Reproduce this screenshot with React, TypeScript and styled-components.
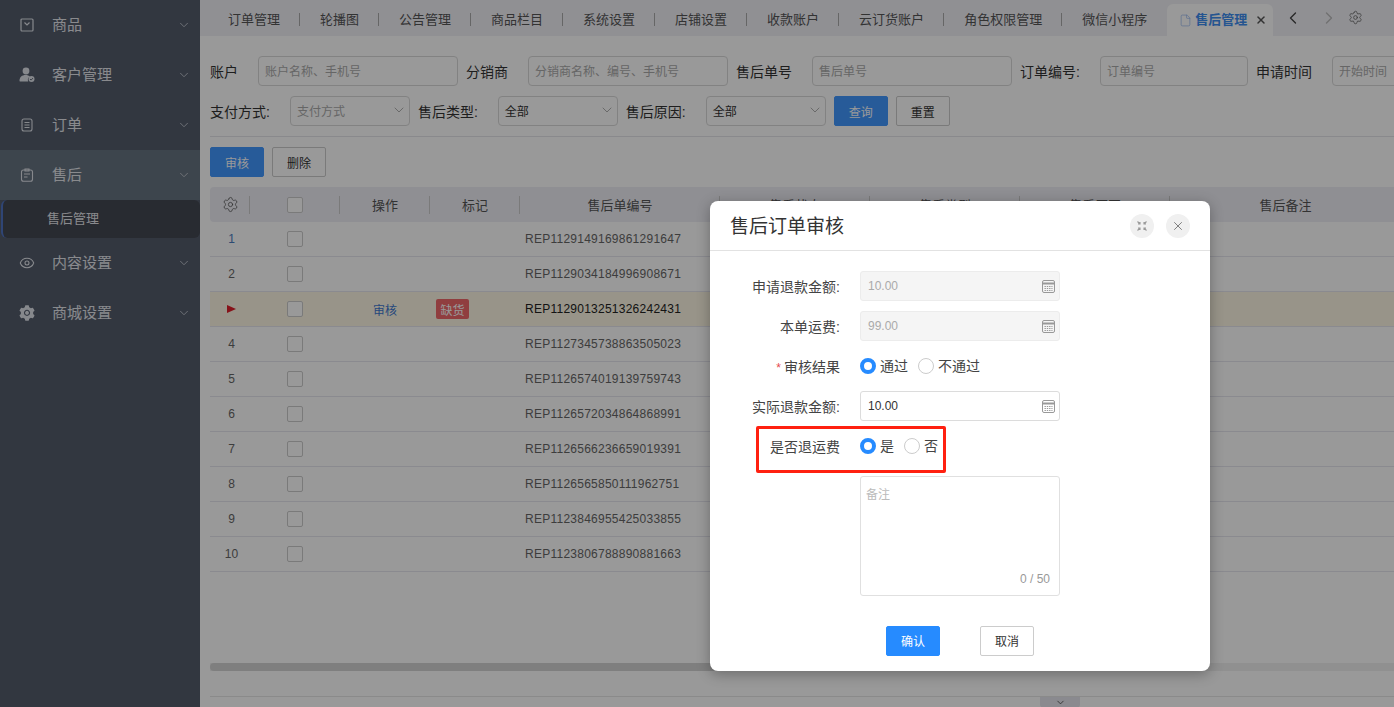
import styled, { createGlobalStyle } from "styled-components";
import { ChevronDown, ChevronLeft, ChevronRight, Eye, File, Settings, X } from "lucide-react";
import { AiFillSetting } from "react-icons/ai";

const GlobalStyle = createGlobalStyle`
  html, body {
    margin: 0;
    height: 100%;
    overflow: hidden;
    font-family: "Liberation Sans", "Noto Sans CJK SC", sans-serif;
    color: #333;
  }
  * { box-sizing: border-box; }
`;

const GoodsIcon = () => (
  <svg width="14" height="14" viewBox="0 0 14 14" fill="none" stroke="#dfe3ea" strokeWidth="1.2">
    <rect x="1" y="1" width="12" height="12" rx="1" />
    <path d="M4.5 4.5 7 7l2.5-2.5" />
  </svg>
);
const CustomerIcon = () => (
  <svg width="16" height="16" viewBox="0 0 16 16">
    <circle cx="7" cy="4" r="3.4" fill="#dfe3ea" />
    <path d="M0.5 14c0-4 2.5-6 6-6 2 0 3.5.6 4.5 1.6-2 1-2.6 3-1.8 4.9H1c-.3 0-.5-.2-.5-.5z" fill="#dfe3ea" />
    <circle cx="12.5" cy="12" r="3" fill="#dfe3ea" />
    <path d="M11 12l1.1 1.1 1.8-2" stroke="#535c6c" fill="none" strokeWidth=".9" />
  </svg>
);
const OrderIcon = () => (
  <svg width="14" height="14" viewBox="0 0 14 14" fill="none" stroke="#dfe3ea" strokeWidth="1.1">
    <rect x="2" y="1" width="10" height="12" rx="2" />
    <path d="M4.5 4.5h5M4.5 7h5M4.5 9.5h5" />
  </svg>
);
const AfterSaleIcon = () => (
  <svg width="14" height="14" viewBox="0 0 14 14" fill="none" stroke="#dfe3ea" strokeWidth="1.1">
    <rect x="1.5" y="2" width="11" height="11.3" rx="2" />
    <path d="M5 1h4v2H5zM4 6h6M4 9h3.5" />
  </svg>
);
const ShrinkIcon = () => (
  <svg width="12" height="12" viewBox="0 0 12 12" fill="none" stroke="#999" strokeWidth="1.1">
    <path d="M1.5 1.5 4 4M4 2v2H2M10.5 1.5 8 4M8 2v2h2M1.5 10.5 4 8M4 10V8H2M10.5 10.5 8 8M8 10V8h2" />
  </svg>
);
const CalcIcon = () => (
  <svg width="13" height="13" viewBox="0 0 13 13" fill="none" stroke="#999">
    <rect x=".5" y=".5" width="12" height="12" rx="1.5" />
    <path d="M1 3.5h11" strokeWidth="2" />
    <path d="M2.5 6.5h8M2.5 8.5h8M2.5 10.5h8" strokeDasharray="1.4 .9" />
  </svg>
);

const menu = [
  { label: "商品", icon: <GoodsIcon /> },
  { label: "客户管理", icon: <CustomerIcon /> },
  { label: "订单", icon: <OrderIcon /> },
  { label: "售后", icon: <AfterSaleIcon />, active: true },
  { label: "内容设置", icon: <Eye size={16} strokeWidth={1.6} /> },
  { label: "商城设置", icon: <AiFillSetting size={18} color="#dfe3ea" /> },
];

const tabs = ["订单管理", "轮播图", "公告管理", "商品栏目", "系统设置", "店铺设置", "收款账户", "云订货账户", "角色权限管理", "微信小程序"];

const rows = [
  "REP1129149169861291647",
  "REP1129034184996908671",
  "REP1129013251326242431",
  "REP1127345738863505023",
  "REP1126574019139759743",
  "REP1126572034864868991",
  "REP1126566236659019391",
  "REP1126565850111962751",
  "REP1123846955425033855",
  "REP1123806788890881663",
];

const extraHeads = ["售后状态", "售后类型", "售后原因", "售后备注"];

export default function App() {
  return (
    <Page>
      <GlobalStyle />
      <Sidebar>
        {menu.map((item) => (
          <div key={item.label}>
            <MenuItem $active={item.active}>
              <MenuIcon>{item.icon}</MenuIcon>
              <MenuText>{item.label}</MenuText>
              <MenuArrow><ChevronDown size={14} strokeWidth={1.5} /></MenuArrow>
            </MenuItem>
            {item.active && <SubItem>售后管理</SubItem>}
          </div>
        ))}
      </Sidebar>

      <Main>
        <TabBar>
          {tabs.map((tab) => (
            <Tab key={tab}>{tab}</Tab>
          ))}
          <ActiveTab>
            <File size={13} strokeWidth={1.2} color="#8fb4ee" />
            <span>售后管理</span>
            <X size={12} strokeWidth={3} color="#555" />
          </ActiveTab>
          <TabTool $left={10}><ChevronLeft size={20} strokeWidth={1.6} color="#444" /></TabTool>
          <TabTool $left={16}><ChevronRight size={20} strokeWidth={1.6} color="#bbb" /></TabTool>
          <TabTool $left={9}><Settings size={15} strokeWidth={1.3} color="#666" /></TabTool>
        </TabBar>

        <Content>
          <FilterRow>
            <FilterLabel>账户</FilterLabel>
            <TextField $width={200}>账户名称、手机号</TextField>
            <FilterLabel>分销商</FilterLabel>
            <TextField $width={200}>分销商名称、编号、手机号</TextField>
            <FilterLabel>售后单号</FilterLabel>
            <TextField $width={200}>售后单号</TextField>
            <FilterLabel>订单编号:</FilterLabel>
            <TextField $width={148}>订单编号</TextField>
            <FilterLabel>申请时间</FilterLabel>
            <TextField $width={148}>开始时间</TextField>
          </FilterRow>
          <FilterRow>
            <FilterLabel>支付方式:</FilterLabel>
            <SelectField $placeholder>支付方式<ChevronDown size={16} strokeWidth={1} color="#888" /></SelectField>
            <FilterLabel>售后类型:</FilterLabel>
            <SelectField>全部<ChevronDown size={16} strokeWidth={1} color="#888" /></SelectField>
            <FilterLabel>售后原因:</FilterLabel>
            <SelectField>全部<ChevronDown size={16} strokeWidth={1} color="#888" /></SelectField>
            <Button $primary>查询</Button>
            <Button>重置</Button>
          </FilterRow>
          <Divider />
          <ActionRow>
            <Button $primary>审核</Button>
            <Button>删除</Button>
          </ActionRow>

          <Table>
            <HeadRow>
              <HeadCell><Settings size={17} strokeWidth={1.1} color="#555" /></HeadCell>
              <HeadCell><Check /></HeadCell>
              <HeadCell>操作</HeadCell>
              <HeadCell>标记</HeadCell>
              <HeadCell>售后单编号</HeadCell>
              {extraHeads.map((head) => (
                <HeadCell key={head}>{head}</HeadCell>
              ))}
            </HeadRow>
            {rows.map((code, index) => (
              <BodyRow key={code} $current={index === 2}>
                <NumberCell $first={index === 0}>{index === 2 ? <Arrow /> : index + 1}</NumberCell>
                <BodyCell $center><Check /></BodyCell>
                <BodyCell $center>{index === 2 && <AuditLink>审核</AuditLink>}</BodyCell>
                <BodyCell>{index === 2 && <Tag>缺货</Tag>}</BodyCell>
                <BodyCell $dark={index === 2}>{code}</BodyCell>
              </BodyRow>
            ))}
          </Table>

          <Spacer />
          <ScrollTrack><ScrollThumb /></ScrollTrack>
          <Footer><FooterToggle><ChevronDown size={11} strokeWidth={1.6} color="#333" /></FooterToggle></Footer>
        </Content>
      </Main>

      <Overlay />

      <Modal>
        <ModalHeader>
          <ModalTitle>售后订单审核</ModalTitle>
          <RoundButton><ShrinkIcon /></RoundButton>
          <RoundButton><X size={14} strokeWidth={1.6} color="#777" /></RoundButton>
        </ModalHeader>
        <ModalBody>
          <FormRow>
            <FormLabel>申请退款金额:</FormLabel>
            <AmountField $disabled>10.00<CalcIcon /></AmountField>
          </FormRow>
          <FormRow>
            <FormLabel>本单运费:</FormLabel>
            <AmountField $disabled>99.00<CalcIcon /></AmountField>
          </FormRow>
          <FormRow>
            <FormLabel><Required>*</Required>审核结果</FormLabel>
            <RadioGroup>
              <RadioOption><Radio $checked /><RadioText>通过</RadioText></RadioOption>
              <RadioOption><Radio /><RadioText>不通过</RadioText></RadioOption>
            </RadioGroup>
          </FormRow>
          <FormRow>
            <FormLabel>实际退款金额:</FormLabel>
            <AmountField>10.00<CalcIcon /></AmountField>
          </FormRow>
          <FormRow>
            <FormLabel>是否退运费</FormLabel>
            <RadioGroup>
              <RadioOption><Radio $checked /><RadioText>是</RadioText></RadioOption>
              <RadioOption><Radio /><RadioText>否</RadioText></RadioOption>
            </RadioGroup>
          </FormRow>
          <RemarkRow>
            <RemarkBox>
              备注
              <Counter>0 / 50</Counter>
            </RemarkBox>
          </RemarkRow>
          <ModalFooter>
            <ModalButton $primary>确认</ModalButton>
            <ModalButton>取消</ModalButton>
          </ModalFooter>
        </ModalBody>
        <Highlight />
      </Modal>
    </Page>
  );
}

const Page = styled.div`
  display: flex;
  width: 100%;
  height: 100vh;
  overflow: hidden;
  position: relative;
`;

const Sidebar = styled.aside`
  width: 200px;
  flex-shrink: 0;
  background: #545c6c;
  color: #e4e7ec;
`;

const MenuItem = styled.div<{ $active?: boolean }>`
  display: flex;
  align-items: center;
  height: 50px;
  padding-left: 18px;
  font-size: 15px;
  background: ${(p) => (p.$active ? "#677380" : "transparent")};
`;

const MenuIcon = styled.span`
  display: flex;
  justify-content: center;
  width: 18px;
  margin-right: 16px;
`;

const MenuText = styled.span`
  padding-bottom: 4px;
`;

const MenuArrow = styled.span`
  display: flex;
  margin-left: auto;
  margin-right: 9px;
  color: #c3c8d0;
`;

const SubItem = styled.div`
  display: flex;
  align-items: center;
  height: 38px;
  margin-left: 1px;
  padding: 0 0 4px 44px;
  font-size: 13px;
  background: #444852;
  border-left: 2px solid #4f74c4;
  border-radius: 6px;
`;

const Main = styled.main`
  flex: 1;
  min-width: 0;
  display: flex;
  flex-direction: column;
  background: #fff;
`;

const TabBar = styled.div`
  display: flex;
  align-items: flex-end;
  height: 36px;
  flex-shrink: 0;
  padding-left: 8px;
  background: #f0f0f5;
`;

const Tab = styled.div`
  position: relative;
  display: flex;
  align-items: center;
  height: 36px;
  padding: 0 20px;
  font-size: 13px;
  color: #555;
  white-space: nowrap;

  &::after {
    content: "";
    position: absolute;
    right: 0;
    top: 13px;
    width: 1px;
    height: 13px;
    background: #aaa;
  }
  &:nth-child(10)::after {
    display: none;
  }
`;

const ActiveTab = styled.div`
  display: flex;
  align-items: center;
  width: 106px;
  height: 32px;
  padding: 0 0 0 12px;
  gap: 4px;
  font-size: 13px;
  font-weight: 700;
  color: #3f8ef0;
  background: #fff;
  border-radius: 6px 6px 0 0;
  white-space: nowrap;

  span {
    padding-bottom: 4px;
  }
  svg:first-child {
    margin-right: -1px;
  }
  svg:last-child {
    margin-left: 4px;
  }
`;

const TabTool = styled.span<{ $left: number }>`
  display: flex;
  align-self: center;
  margin-left: ${(p) => p.$left}px;
  margin-top: -1px;
`;

const Content = styled.div`
  flex: 1;
  min-height: 0;
  display: flex;
  flex-direction: column;
  padding: 20px 0 0 10px;
`;

const FilterRow = styled.div`
  display: flex;
  align-items: center;
  height: 30px;
  margin-bottom: 10px;
  white-space: nowrap;
`;

const FilterLabel = styled.label`
  margin-right: 20px;
  font-size: 14px;
  color: #333;
`;

const TextField = styled.div<{ $width: number }>`
  display: flex;
  align-items: center;
  flex-shrink: 0;
  width: ${(p) => p.$width}px;
  height: 30px;
  margin-right: 8px;
  padding: 0 6px 2px;
  font-size: 12px;
  color: #aaa;
  border: 1px solid #d9d9d9;
  border-radius: 4px;
`;

const SelectField = styled.div<{ $placeholder?: boolean }>`
  display: flex;
  align-items: center;
  justify-content: space-between;
  flex-shrink: 0;
  width: 120px;
  height: 30px;
  margin-right: 8px;
  padding: 0 2px 2px 6px;
  font-size: 12px;
  color: ${(p) => (p.$placeholder ? "#aaa" : "#333")};
  border: 1px solid #d9d9d9;
  border-radius: 4px;
`;

const Button = styled.button<{ $primary?: boolean }>`
  width: 54px;
  height: 30px;
  margin-right: 8px;
  padding: 0;
  font: inherit;
  font-size: 12px;
  color: ${(p) => (p.$primary ? "#fff" : "#333")};
  background: ${(p) => (p.$primary ? "#4298ff" : "#fff")};
  border: 1px solid ${(p) => (p.$primary ? "#4298ff" : "#ccc")};
  border-radius: 2px;
`;

const Divider = styled.div`
  height: 1px;
  background: #e4e4ea;
`;

const ActionRow = styled.div`
  display: flex;
  margin: 10px 0;
`;

const Table = styled.div`
  display: flex;
  flex-direction: column;
  font-size: 12px;
`;

const columns = "40px 90px 90px 90px 200px 150px 150px 150px 231px";

const HeadRow = styled.div`
  display: grid;
  grid-template-columns: ${columns};
  height: 35px;
  background: #efeff6;
  border-radius: 4px 0 0 4px;
`;

const HeadCell = styled.div`
  position: relative;
  display: flex;
  align-items: center;
  justify-content: center;
  font-size: 13px;
  color: #555;

  &:not(:last-child)::after {
    content: "";
    position: absolute;
    right: 0;
    top: 9px;
    width: 1px;
    height: 18px;
    background: #ccc;
  }
`;

const BodyRow = styled.div<{ $current?: boolean }>`
  display: grid;
  grid-template-columns: ${columns};
  height: 35px;
  background: ${(p) => (p.$current ? "#fdf7e4" : "#fff")};
  border-bottom: 1px solid #e6e6ee;
`;

const BodyCell = styled.div<{ $center?: boolean; $dark?: boolean }>`
  display: flex;
  align-items: center;
  justify-content: ${(p) => (p.$center ? "center" : "flex-start")};
  padding-left: ${(p) => (p.$center ? 0 : 5)}px;
  letter-spacing: 0.25px;
  color: ${(p) => (p.$dark ? "#222" : "#666")};
  white-space: nowrap;
`;

const NumberCell = styled.div<{ $first?: boolean }>`
  display: flex;
  align-items: center;
  justify-content: center;
  padding-left: 3px;
  color: ${(p) => (p.$first ? "#4a7cc0" : "#666")};
`;

const Check = styled.span`
  display: block;
  width: 16px;
  height: 16px;
  background: #fff;
  border: 1px solid #ccc;
  border-radius: 2px;
`;

const Arrow = styled.span`
  display: block;
  border-left: 9px solid #e01e2a;
  border-top: 4px solid transparent;
  border-bottom: 4px solid transparent;
`;

const AuditLink = styled.a`
  font-size: 12px;
  letter-spacing: 0;
  color: #4178d0;
`;

const Tag = styled.span`
  display: flex;
  align-items: center;
  justify-content: center;
  width: 33px;
  height: 20px;
  margin-left: 1px;
  font-size: 12px;
  letter-spacing: 0;
  color: #fff;
  background: #f0686a;
  border-radius: 2px;
`;

const Spacer = styled.div`
  flex: 1;
`;

const ScrollTrack = styled.div`
  height: 8px;
  margin-bottom: 25px;
  background: #f0f0f0;
`;

const ScrollThumb = styled.div`
  width: 620px;
  height: 8px;
  background: #d4d4d4;
  border-radius: 4px;
`;

const Footer = styled.div`
  display: flex;
  height: 11px;
  padding-left: 830px;
  border-top: 1px solid #e6e6e6;
`;

const FooterToggle = styled.div`
  display: flex;
  align-items: center;
  justify-content: center;
  width: 40px;
  height: 11px;
  background: #e6e6ee;
  border-radius: 0 0 4px 4px;
`;

const Overlay = styled.div`
  position: absolute;
  inset: 0;
  background: rgba(0, 0, 0, 0.4);
`;

const Modal = styled.section`
  position: absolute;
  left: 710px;
  top: 201px;
  width: 500px;
  height: 470px;
  background: #fff;
  border-radius: 8px;
  box-shadow: 0 3px 14px rgba(0, 0, 0, 0.3);
`;

const ModalHeader = styled.header`
  display: flex;
  align-items: center;
  gap: 12px;
  height: 50px;
  padding: 0 20px;
  border-bottom: 1px solid #e2e2e2;
`;

const ModalTitle = styled.h2`
  flex: 1;
  margin: 0;
  padding-bottom: 2px;
  font-size: 19px;
  font-weight: 400;
  color: #333;
`;

const RoundButton = styled.span`
  display: flex;
  align-items: center;
  justify-content: center;
  width: 24px;
  height: 24px;
  background: #f0f0f0;
  border-radius: 50%;
`;

const ModalBody = styled.div`
  padding-top: 20px;
`;

const FormRow = styled.div`
  display: flex;
  align-items: center;
  height: 30px;
  margin-bottom: 10px;
`;

const FormLabel = styled.label`
  width: 130px;
  margin-right: 20px;
  text-align: right;
  font-size: 14px;
  color: #444;
`;

const Required = styled.span`
  margin-right: 3px;
  font-size: 12px;
  color: #e5484d;
`;

const AmountField = styled.div<{ $disabled?: boolean }>`
  display: flex;
  align-items: center;
  justify-content: space-between;
  width: 200px;
  height: 30px;
  padding: 0 4px 0 7px;
  font-size: 12px;
  color: ${(p) => (p.$disabled ? "#aaa" : "#333")};
  background: ${(p) => (p.$disabled ? "#f5f5f5" : "#fff")};
  border: 1px solid ${(p) => (p.$disabled ? "#ececec" : "#dcdcdc")};
  border-radius: 3px;
`;

const RadioGroup = styled.div`
  display: flex;
  gap: 10px;
`;

const RadioOption = styled.label`
  display: flex;
  align-items: center;
  gap: 4px;
  font-size: 14px;
  color: #444;
`;

const RadioText = styled.span`
  padding-bottom: 2px;
`;

const Radio = styled.span<{ $checked?: boolean }>`
  display: block;
  width: 16px;
  height: 16px;
  background: #fff;
  border: ${(p) => (p.$checked ? "4.5px solid #268bff" : "1px solid #ccc")};
  border-radius: 50%;
`;

const RemarkRow = styled.div`
  display: flex;
  padding-left: 150px;
  margin-top: 15px;
`;

const RemarkBox = styled.div`
  position: relative;
  width: 200px;
  height: 120px;
  padding: 8px 5px;
  font-size: 12px;
  color: #bbb;
  border: 1px solid #e0e0e0;
  border-radius: 3px;
`;

const Counter = styled.span`
  position: absolute;
  right: 9px;
  bottom: 9px;
  color: #999;
`;

const ModalFooter = styled.div`
  display: flex;
  justify-content: center;
  gap: 40px;
  margin-top: 30px;
`;

const ModalButton = styled.button<{ $primary?: boolean }>`
  width: 54px;
  height: 30px;
  padding: 0 0 2px;
  font: inherit;
  font-size: 12px;
  color: ${(p) => (p.$primary ? "#fff" : "#333")};
  background: ${(p) => (p.$primary ? "#268bff" : "#fff")};
  border: 1px solid ${(p) => (p.$primary ? "#268bff" : "#ccc")};
  border-radius: 2px;
`;

const Highlight = styled.div`
  position: absolute;
  left: 46px;
  top: 225px;
  width: 190px;
  height: 47px;
  border: 3px solid #ff2010;
  border-radius: 2px;
`;
